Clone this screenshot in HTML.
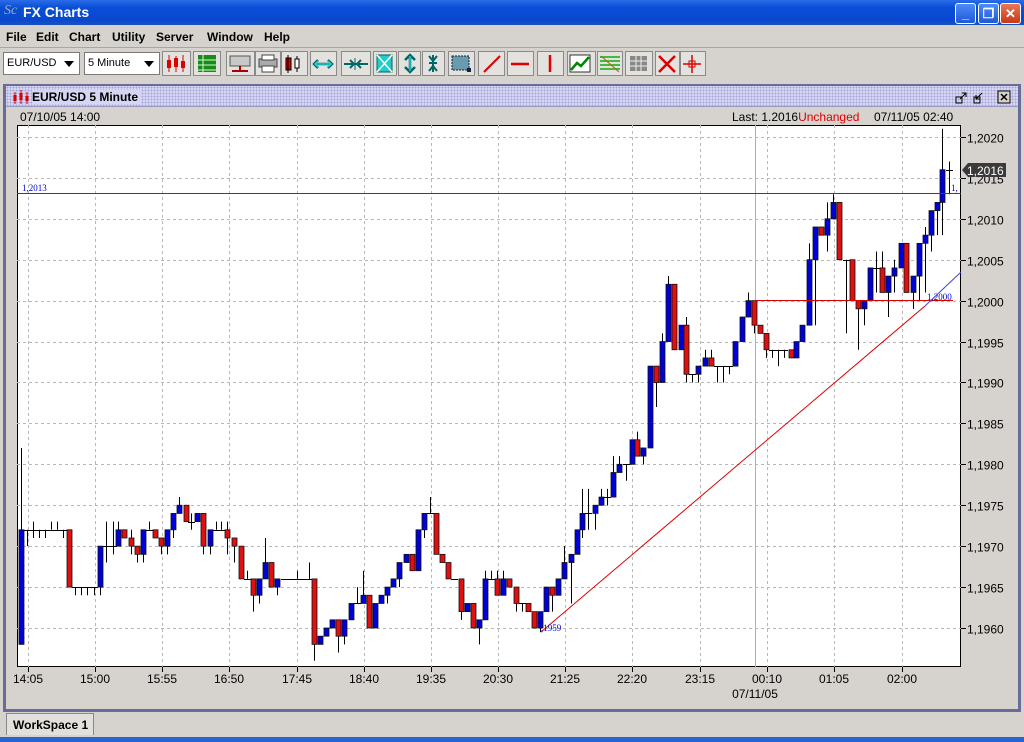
<!DOCTYPE html>
<html><head><meta charset="utf-8">
<style>
*{margin:0;padding:0;box-sizing:border-box}
body{width:1024px;height:742px;overflow:hidden;background:#d6d3ce;font-family:"Liberation Sans",sans-serif;font-size:12px;position:relative}
.abs{position:absolute}
#title{left:0;top:0;width:1024px;height:25px;background:linear-gradient(#2a6ce8,#0a4fd6 30%,#0848d0 80%,#1a52c0);color:#fff;font-weight:bold;font-size:14px}
.wb{top:3px;width:21px;height:21px;border:1px solid #fff;border-radius:3px;background:linear-gradient(#4d8cf5,#2058d8);color:#fff;text-align:center;font-size:13px;line-height:19px}
#menu{top:25px;left:0;width:1024px;height:23px;border-bottom:1px solid #a8a6a0}
#menu span{position:absolute;top:5px;font-weight:bold;font-size:12px}
.combo{top:52px;height:23px;background:#fff;border:1px solid #7a7a7a;font-size:11px;padding:4px 3px}
.combo b{position:absolute;right:5px;top:8px;width:0;height:0;border-left:5px solid transparent;border-right:5px solid transparent;border-top:6px solid #000}
#frame{left:3px;top:84px;width:1018px;height:628px;border:3px solid #6a6c98;border-top-width:2px;background:#d6d3ce}
#ftitle{left:0;top:0;width:1012px;height:21px;background-color:#d6d6f4;background-image:radial-gradient(#a8a8d8 0.8px,transparent 1px);background-size:3px 3px;border-bottom:1px solid #9a9ac8}
#tab{left:6px;top:713px;width:88px;height:22px;border:1px solid #888;border-bottom:none;background:#e2e0dc;font-weight:bold;padding:4px 0 0 6px}
#task{left:0;top:737px;width:1024px;height:5px;background:#2a62d8}
</style></head><body>
<div id="title" class="abs">
 <span class="abs" style="left:4px;top:3px;font-family:'Liberation Serif',serif;font-style:italic;color:#9ab;font-weight:normal">Sc</span>
 <span class="abs" style="left:23px;top:4px">FX Charts</span>
 <div class="abs wb" style="left:955px">_</div>
 <div class="abs wb" style="left:978px">❐</div>
 <div class="abs wb" style="left:1000px;background:linear-gradient(#e87858,#c83818)">✕</div>
</div>
<div id="menu" class="abs">
 <span style="left:6px">File</span><span style="left:36px">Edit</span><span style="left:69px">Chart</span><span style="left:112px">Utility</span><span style="left:156px">Server</span><span style="left:207px">Window</span><span style="left:264px">Help</span>
</div>
<div class="abs combo" style="left:3px;width:77px">EUR/USD<b></b></div>
<div class="abs combo" style="left:84px;width:76px">5 Minute<b></b></div>
<svg class="abs" style="left:0;top:0" width="1024" height="84" id="tb"></svg>
<div id="frame" class="abs">
 <div id="ftitle" class="abs">
  <span class="abs" style="left:26px;top:4px;font-weight:bold;font-size:12px;background:#d6d6f4;padding-right:3px">EUR/USD 5 Minute</span>
  <svg class="abs" style="left:6px;top:3px" width="18" height="16"><path d="M3 3v12M9 1v14M15 3v12" stroke="#d00" stroke-width="1"/><rect x="1.5" y="6" width="3" height="6" fill="#d00"/><rect x="7.5" y="4" width="3" height="7" fill="#d00"/><rect x="13.5" y="7" width="3" height="5" fill="#d00"/></svg>
  <svg class="abs" style="left:948px;top:3px" width="60" height="16"><path d="M2 8h6v6H2z M6 10l6-6 M8 4h4v4" stroke="#000" fill="none"/><path d="M20 8h6v6h-6z M22 10l6-6 M22 6v4h4" stroke="#000" fill="none"/><rect x="44" y="2" width="12" height="12" fill="#d6d3ce" stroke="#000"/><path d="M47 5l6 6M53 5l-6 6" stroke="#000" stroke-width="1.5"/></svg>
 </div>
</div>
<svg class="abs" style="left:0;top:0" width="1024" height="712" id="ch"></svg>
<div id="tab" class="abs">WorkSpace 1</div>
<div id="task" class="abs"></div>
<script>
var NS="http://www.w3.org/2000/svg";
function el(p,t,a,tx){var e=document.createElementNS(NS,t);for(var k in a)e.setAttribute(k,a[k]);if(tx!==undefined)e.textContent=tx;p.appendChild(e);return e;}
var tb=document.getElementById('tb');
var bx=[[162,28],[193,27],[226,28],[255,25],[281,26],[310,26],[341,29],[373,23],[398,22],[422,22],[448,26],[478,26],[507,26],[537,26],[567,28],[597,25],[625,27],[655,24],[680,25]];
bx.forEach(function(b){el(tb,'rect',{x:b[0]+.5,y:51.5,width:b[1],height:24,fill:'#e4e2de',stroke:'#8a8a8a'});});
function P(d,c,w){el(tb,'path',{d:d,stroke:c,'stroke-width':w||1.5,fill:'none'});}
P('M169 55v17M176 56v16M183 55v17','#d00',1);el(tb,'rect',{x:167,y:60,width:4,height:8,fill:'#d00'});el(tb,'rect',{x:174,y:58,width:4,height:9,fill:'#d00'});el(tb,'rect',{x:181,y:61,width:4,height:7,fill:'#d00'});
el(tb,'rect',{x:198,y:55,width:18,height:17,fill:'#1a8a1a'});P('M198 60h18M198 65h18M198 70h18M203 55v17','#cfc',1);
el(tb,'rect',{x:230,y:56,width:20,height:10,fill:'#c8c8c8',stroke:'#555'});P('M240 66v5M232 71h16','#a00',2);
el(tb,'rect',{x:259,y:59,width:18,height:8,fill:'#aaa',stroke:'#444'});el(tb,'rect',{x:262,y:55,width:12,height:5,fill:'#fff',stroke:'#444'});el(tb,'rect',{x:262,y:66,width:12,height:6,fill:'#fff',stroke:'#444'});
el(tb,'rect',{x:286,y:58,width:5,height:12,fill:'#d00',stroke:'#000'});P('M288 55v18M297 56v16','#000',1);el(tb,'rect',{x:295,y:59,width:4,height:9,fill:'#fff',stroke:'#000'});
P('M314 64h18M318 60l-4 4 4 4M328 60l4 4-4 4','#066',2.5);P('M315 64h16M318 61l-3 3 3 3M328 61l3 3-3 3','#2cc',1.5);
P('M344 64h24M350 60l4 4-4 4M361 60l-4 4 4 4','#066',2);P('M355 58v12','#066',1);
el(tb,'rect',{x:377,y:55,width:15,height:17,fill:'#2cc',stroke:'#066'});P('M377 55l15 17M392 55l-15 17','#fff',1.5);
P('M410 55v17M405 60l5-5 5 5M405 67l5 5 5-5','#066',2.5);P('M410 56v15','#2cc',1.5);
P('M433 55v17M429 56l4 5 4-5M429 71l4-5 4 5M429 63h8','#066',2);
el(tb,'rect',{x:452,y:56,width:17,height:14,fill:'#6a9ab0',stroke:'#123','stroke-dasharray':'2,1'});el(tb,'rect',{x:467,y:68,width:4,height:4,fill:'#124'});
P('M484 72l16-16','#d00',2);P('M511 64h18','#d00',2.5);P('M550 55v17','#d00',2.5);
el(tb,'rect',{x:570,y:55,width:20,height:17,fill:'#fff',stroke:'#333'});P('M571 70l6-7 4 3 8-9','#080',2.5);
P('M600 57h20M600 61h20M600 65h20M600 69h20','#1a1',1.5);P('M601 56l18 16','#a60',1);
el(tb,'rect',{x:630,y:56,width:17,height:15,fill:'#888'});P('M630 61h17M630 66h17M636 56v15M641 56v15','#eee',1);
P('M659 56l16 16M675 56l-16 16','#d00',2.5);
P('M692 55v18M683 64h18','#d00',1.5);el(tb,'rect',{x:689,y:61,width:6,height:6,fill:'none',stroke:'#d00'});

var s=document.getElementById('ch');
var L=17,R=961,T=125,B=667;
function Y(p){return 628-p*8.184;}
el(s,'text',{x:20,y:121,'font-size':12,fill:'#000'},'07/10/05 14:00');
var hd=el(s,'text',{x:732,y:121,'font-size':12,fill:'#000'});
hd.innerHTML='Last: 1.2016<tspan fill="#d00">Unchanged</tspan>  <tspan x="874">07/11/05 02:40</tspan>';
el(s,'rect',{x:L+.5,y:T+.5,width:R-L-1,height:B-T-1,fill:'#fff',stroke:'#000'});
var tx=[28,95,162,229,297,364,431,498,565,632,700,767,834,902],tl=['14:05','15:00','15:55','16:50','17:45','18:40','19:35','20:30','21:25','22:20','23:15','00:10','01:05','02:00'];
tx.forEach(function(x,i){el(s,'line',{x1:x+.5,y1:T,x2:x+.5,y2:B,stroke:'#b8b8b8','stroke-dasharray':'3,3'});el(s,'line',{x1:x+.5,y1:B,x2:x+.5,y2:B+5,stroke:'#000'});el(s,'text',{x:x,y:683,'font-size':12,'text-anchor':'middle'},tl[i]);});
el(s,'text',{x:755,y:698,'font-size':12,'text-anchor':'middle'},'07/11/05');
el(s,'line',{x1:755.5,y1:T,x2:755.5,y2:B,stroke:'#b0b0b0'});
for(var p=0;p<=60;p+=5){var y=Math.round(Y(p))+.5;el(s,'line',{x1:L,y1:y,x2:R,y2:y,stroke:'#b8b8b8','stroke-dasharray':'3,3'});el(s,'line',{x1:R,y1:y,x2:R+5,y2:y,stroke:'#000'});
 el(s,'text',{x:967,y:y+5,'font-size':12},(p==0?'1,1960':'1,'+(1960+p)));}
var z3=[[22,-2,12,22,-2],[40,12,12,12,10],[58,12,12,13,11],[76,12,12,12,11],[94,12,12,12,11],[112,12,12,13,12],[130,12,12,13,12],[148,12,12,12,11],[165,12,5,12,5],[183,5,5,5,4],[202,5,5,5,4],[220,5,5,5,4],[240,5,5,5,4],[257,5,10,10,4],[277,10,10,13,8],[296,10,10,13,9],[311,10,12,13,10],[329,12,11,12,11],[350,11,10,12,9],[368,10,9,10,8],[386,9,12,12,8],[405,12,12,13,12],[422,12,11,12,11],[440,11,10,11,9],[459,10,12,12,9],[477,12,14,14,11],[495,14,15,16,14],[515,15,13,15,13],[532,13,13,14,12],[550,13,14,14,13],[568,14,10,14,9],[587,10,12,12,9],[605,12,12,13,12],[622,12,12,13,12],[640,12,11,13,9],[660,11,10,11,8],[680,10,6,10,6],[698,6,6,7,6],[716,6,4,6,2],[734,4,6,6,3],[753,6,8,11,6],[770,8,5,8,5],[790,5,6,6,4],[810,6,6,6,6],[828,6,6,6,6],[848,6,6,7,6],[866,6,6,6,6],[884,6,6,8,6]];
var z4=[[45,6,-2,6,-4],[62,-2,-1,-1,-2],[80,-1,0,0,-1],[98,0,1,1,0],[118,1,-1,1,-3],[135,-1,1,1,-2],[155,1,3,3,1],[173,3,3,5,3],[192,3,4,7,3],[210,4,0,4,0],[228,0,3,3,0],[246,3,4,4,3],[264,4,5,5,3],[282,5,6,6,5],[300,6,8,8,5],[320,8,9,9,8],[338,9,7,9,7],[356,7,12,12,7],[375,12,14,14,11],[393,14,14,16,14],[410,14,9,14,9],[428,9,8,9,8],[447,8,6,8,6],[465,6,6,6,6],[485,6,2,6,1],[503,2,3,3,2],[522,3,0,3,0],[540,0,1,1,-2],[558,1,6,7,1],[576,6,6,7,6],[594,6,4,7,4],[612,4,6,7,4],[630,6,5,6,5],[650,5,3,5,2],[668,3,3,3,2],[686,3,2,3,2],[705,2,0,2,0],[722,0,2,2,-0.5],[740,2,5,5,2],[758,5,4,5,2],[777,4,6,6,4],[795,6,8,10,6],[815,8,9,9,3],[833,9,12,12,9],[850,12,14,17,11],[868,14,14,17,12],[887,14,15,15,12],[905,15,16,17,15],[923,16,16,17,15],[942,16,19,21,16],[960,19,20,21,19],[980,20,20,20,18]];
var z5=[[98,20,23,23,20],[115,23,21,24,21],[133,21,22,22,20],[152,22,32,32,22],[170,32,30,32,27],[188,30,35,36,30],[208,35,42,43,35],[225,42,34,42,34],[245,34,37,37,34],[262,37,31,38,30],[280,31,31,31,30],[298,31,32,32,30],[318,32,33,34,32],[336,33,32,34,32],[355,32,32,32,30],[372,32,32,32,30],[390,32,32,32,31],[408,32,35,35,32],[428,35,38,38,35],[446,38,40,41,38],[464,40,37,40,36],[482,37,36,37,36],[500,36,34,36,33],[518,34,34,34,33],[537,34,34,34,32],[555,34,34,34,33],[575,34,33,34,33],[592,33,35,35,33],[610,35,37,37,35],[630,37,45,47,37],[648,45,49,49,37],[666,49,48,49,48],[685,48,50,52,46],[703,50,52,53,50],[720,52,45,52,45],[740,45,45,45,36],[758,45,40,45,40],[776,40,39,40,34],[795,39,40,40,37],[813,40,44,44,40],[832,44,44,46,41],[850,44,41,46,41],[868,41,43,43,38],[885,43,44,45,41],[905,44,47,47,44],[922,47,41,47,41],[942,41,43,43,39],[960,43,47,47,40],[978,47,48,49,41],[996,48,51,51,46],[1014,51,52,52,48],[1030,52,56,61,48]];
var bars=[];
z3.forEach(function(b){bars.push([15+b[0]/3,b[1],b[2],b[3],b[4]]);});
z4.forEach(function(b){bars.push([300+b[0]/3,b[1],b[2],b[3],b[4]]);});
z5.forEach(function(b){bars.push([600+b[0]/3,b[1],b[2],b[3],b[4]]);});
bars.push([950,56,56,57,53]);
bars.forEach(function(b){var x=Math.round(b[0]-1);
 el(s,'line',{x1:x+.5,y1:Y(b[3]),x2:x+.5,y2:Y(b[4]),stroke:'#000'});
 if(b[1]==b[2]){el(s,'line',{x1:x-3,y1:Math.round(Y(b[1]))+.5,x2:x+4,y2:Math.round(Y(b[1]))+.5,stroke:'#000'});}
 else{var t=Y(Math.max(b[1],b[2])),bt=Y(Math.min(b[1],b[2]));
  el(s,'rect',{x:x-2,y:t,width:5,height:Math.max(bt-t,1),fill:b[2]>b[1]?'#0000d8':'#e01010',stroke:'#111','stroke-width':0.8});}
});
el(s,'line',{x1:L,y1:193.5,x2:R,y2:193.5,stroke:'#d00'});
el(s,'text',{x:22,y:191,'font-size':9,fill:'#00c','font-family':'Liberation Serif,serif'},'1,2013');
el(s,'text',{x:951,y:191,'font-size':9,fill:'#00c','font-family':'Liberation Serif,serif'},'1,');
el(s,'line',{x1:755,y1:300.5,x2:953,y2:300.5,stroke:'#d00'});
el(s,'text',{x:927,y:300,'font-size':9,fill:'#00c','font-family':'Liberation Serif,serif'},'1,2000');
el(s,'line',{x1:541,y1:632,x2:925,y2:306,stroke:'#d00'});
el(s,'line',{x1:925,y1:306,x2:961,y2:272,stroke:'#44c'});
el(s,'text',{x:541,y:631,'font-size':9,fill:'#00c','font-family':'Liberation Serif,serif'},',1959');
el(s,'path',{d:'M962 170l6-7h38v14h-38z',fill:'#3a3a3a'});
el(s,'text',{x:967,y:175,'font-size':12,fill:'#fff'},'1,2016');
</script>
</body></html>
